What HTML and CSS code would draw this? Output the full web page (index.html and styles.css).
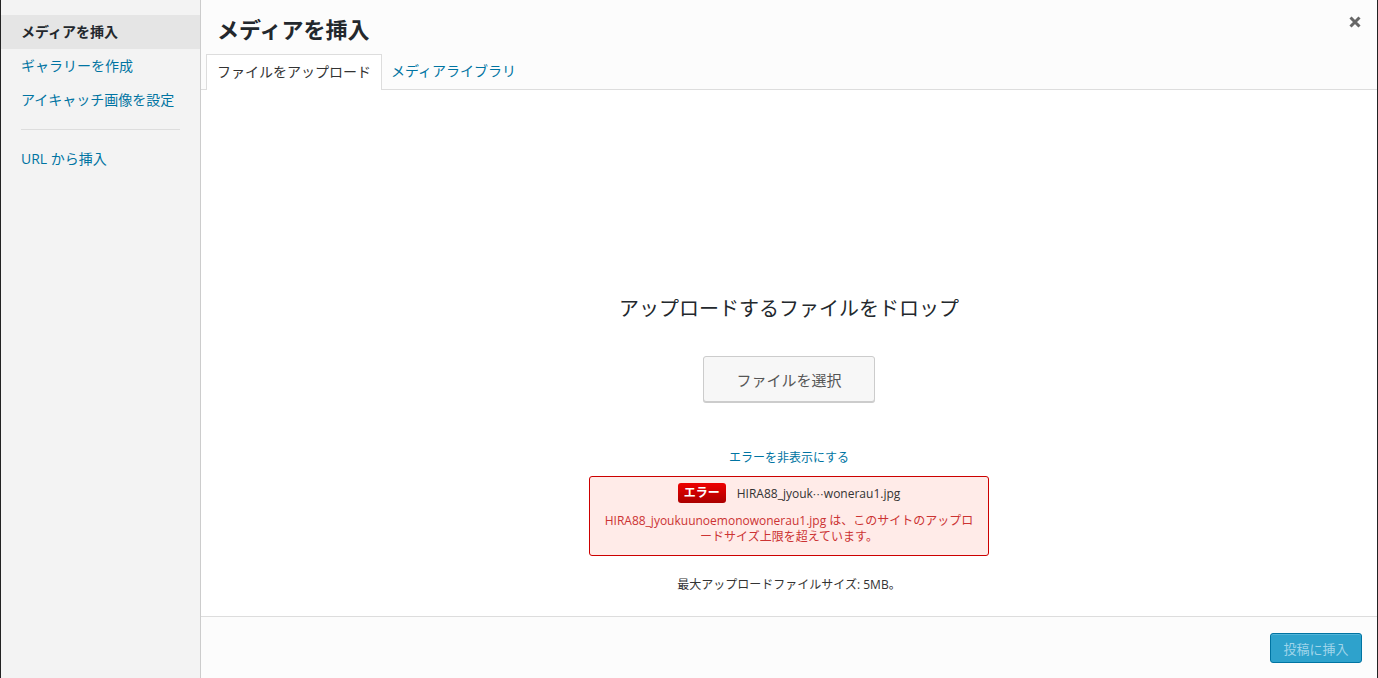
FILE: index.html
```html
<html>
	<head>
		<meta charset="utf-8">
		<link rel="stylesheet" href="styles.css">
	</head>
	<body>
		<div class="modal">
			<div class="menu">
				<a class="menu-item menu-item--active">メディアを挿入</a>
				<a class="menu-item">ギャラリーを作成</a>
				<a class="menu-item">アイキャッチ画像を設定</a>
				<div class="menu-separator"></div>
				<a class="menu-item">URL から挿入</a>
			</div>
			<div class="frame">
				<div class="frame-header">
					<h1 class="frame-title">メディアを挿入</h1>
					<button type="button" class="close-button">
						<svg width="12" height="12" viewBox="0 0 12 12"><path d="M1.5 1.5 L10.5 10.5 M10.5 1.5 L1.5 10.5" stroke="#666" stroke-width="3" fill="none"/></svg>
					</button>
					<div class="tabs">
						<a class="tab tab--active">ファイルをアップロード</a>
						<a class="tab">メディアライブラリ</a>
					</div>
				</div>
				<div class="frame-content">
					<div class="drop-title">アップロードするファイルをドロップ</div>
					<button type="button" class="select-button">ファイルを選択</button>
					<a class="hide-errors">エラーを非表示にする</a>
					<div class="upload-error">
						<div class="upload-error__head">
							<span class="upload-error__label">エラー</span>
							<span class="upload-error__file">HIRA88_jyouk<span class="ellipsis">⋯</span>wonerau1.jpg</span>
						</div>
						<div class="upload-error__message">HIRA88_jyoukuunoemonowonerau1.jpg は、このサイトのアップロードサイズ上限を超えています。</div>
					</div>
					<div class="max-size">最大アップロードファイルサイズ: 5MB。</div>
				</div>
				<div class="frame-footer">
					<button type="button" class="insert-button">投稿に挿入</button>
				</div>
			</div>
		</div>
	</body>
</html>
```

FILE: styles.css
```css
body {
	margin: 0;
	height: 678px;
	overflow: hidden;
	font-family: "Open Sans", "Noto Sans CJK JP", sans-serif;
	color: #444;
	background: #222;
}
.modal {
	display: flex;
	height: 678px;
	margin: 0 1px;
	background: #fcfcfc;
}
.menu {
	width: 199px;
	flex-shrink: 0;
	background: #f3f3f3;
	border-right: 1px solid #ccc;
	padding-top: 15px;
	box-sizing: content-box;
}
.menu-item {
	display: block;
	height: 34px;
	line-height: 34px;
	padding-left: 20px;
	font-size: 14px;
	color: #0074a2;
	cursor: pointer;
}
.menu-item--active {
	background: #e5e5e5;
	color: #23282d;
	font-weight: bold;
}
.menu-separator {
	height: 1px;
	background: #ddd;
	margin: 12px 20px 12px 20px;
}
.frame {
	flex: 1;
	display: flex;
	flex-direction: column;
	position: relative;
}
.frame-header {
	height: 89px;
	border-bottom: 1px solid #ddd;
	background: #fcfcfc;
	display: flex;
	flex-direction: column;
}
.frame-title {
	margin: 0;
	height: 54px;
	line-height: 58px;
	padding-left: 16px;
	font-size: 22px;
	font-weight: bold;
	color: #23282d;
}
.close-button {
	position: absolute;
	top: 15px;
	right: 15px;
	width: 14px;
	height: 14px;
	padding: 0;
	border: 0;
	background: none;
	cursor: pointer;
}
.tabs {
	display: flex;
	padding-left: 5px;
	height: 35px;
}
.tab {
	display: block;
	height: 35px;
	line-height: 34px;
	padding: 0 9px;
	font-size: 14px;
	color: #0074a2;
	cursor: pointer;
}
.tab--active {
	background: #fff;
	color: #333;
	border: 1px solid #ddd;
	border-bottom: 0;
	padding: 0 10px;
	height: 36px;
}
.frame-content {
	flex: 1;
	background: #fff;
	display: flex;
	flex-direction: column;
	align-items: center;
	padding-top: 205px;
	box-sizing: border-box;
}
.drop-title {
	font-size: 20px;
	line-height: 28px;
	color: #23282d;
}
.select-button {
	margin-top: 33px;
	width: 172px;
	height: 46px;
	background: #f7f7f7;
	border: 1px solid #ccc;
	border-radius: 3px;
	box-shadow: 0 1px 0 #ccc;
	font-family: "Open Sans", "Noto Sans CJK JP", sans-serif;
	font-size: 15px;
	color: #555;
	cursor: pointer;
}
.hide-errors {
	margin-top: 47px;
	font-size: 12px;
	line-height: 18px;
	color: #0074a2;
	cursor: pointer;
}
.upload-error {
	margin-top: 9px;
	width: 400px;
	box-sizing: border-box;
	height: 80px;
	padding: 6px 10px 0;
	background: #ffebe8;
	border: 1px solid #c00;
	border-radius: 3px;
	text-align: center;
}
.upload-error__head {
	display: flex;
	justify-content: center;
	align-items: center;
	gap: 11px;
	height: 20px;
}
.upload-error__label {
	background: linear-gradient(#e00, #a00);
	color: #fff;
	font-weight: bold;
	font-size: 12px;
	line-height: 20px;
	padding: 0 6px;
	border-radius: 3px;
}
.upload-error__file {
	font-size: 12px;
	color: #333;
}
.ellipsis {
	font-family: "DejaVu Sans", sans-serif;
	font-size: 11px;
}
.upload-error__message {
	margin-top: 10px;
	font-size: 12px;
	line-height: 16px;
	color: #c33;
}
.max-size {
	margin-top: 20px;
	font-size: 12px;
	line-height: 18px;
	color: #333;
}
.frame-footer {
	height: 62px;
	border-top: 1px solid #ddd;
	background: #fcfcfc;
	display: flex;
	justify-content: flex-end;
	align-items: flex-start;
	padding: 16px 15px 0 0;
	box-sizing: border-box;
	flex-shrink: 0;
}
.insert-button {
	width: 92px;
	height: 30px;
	background: #2ea2cc;
	border: 1px solid #0074a2;
	border-radius: 3px;
	box-shadow: inset 0 1px 0 rgba(120,200,230,0.5);
	font-family: "Open Sans", "Noto Sans CJK JP", sans-serif;
	font-size: 13px;
	color: #a0d5ea;
	cursor: default;
}
```
